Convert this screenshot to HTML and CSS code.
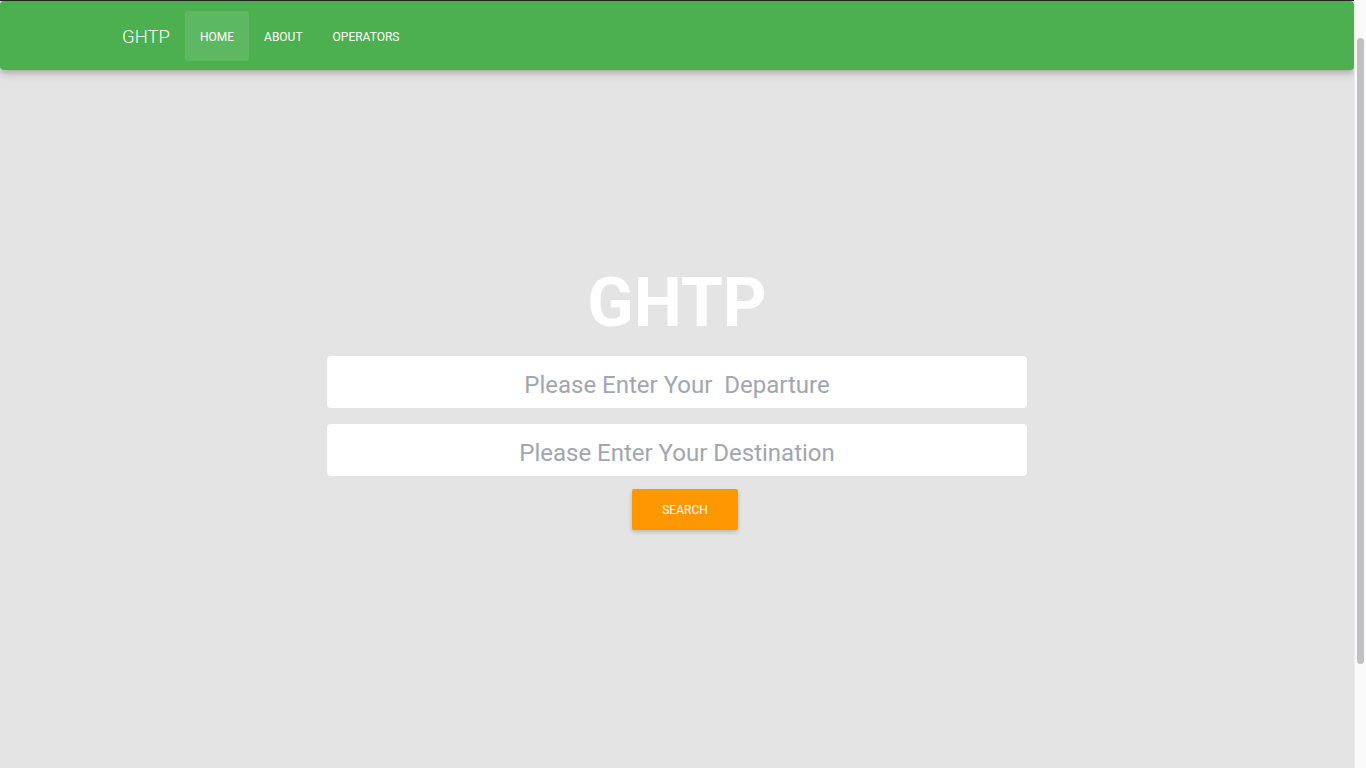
FILE: index.html
```html
<!DOCTYPE html>
<html lang="en">
<head>
<meta charset="utf-8">
<title>GHTP</title>
<link rel="stylesheet" href="styles.css">
</head>
<body>
<div class="page">
  <nav class="navbar">
    <a class="brand" href="#">GHTP</a>
    <ul class="nav">
      <li><a class="nav-link active" href="#">HOME</a></li>
      <li><a class="nav-link" href="#">ABOUT</a></li>
      <li><a class="nav-link" href="#">OPERATORS</a></li>
    </ul>
  </nav>
  <main class="hero">
    <h1 class="title">GHTP</h1>
    <form class="search">
      <input class="field" type="text" placeholder="Please Enter Your  Departure">
      <input class="field" type="text" placeholder="Please Enter Your Destination">
      <button class="btn" type="button">SEARCH</button>
    </form>
  </main>
</div>
<div class="scrollbar"><div class="thumb"></div></div>
</body>
</html>
```

FILE: styles.css
```css
html, body {
  margin: 0;
  padding: 0;
  height: 100%;
  overflow: hidden;
}
body {
  background: #e4e4e4;
  font-family: Roboto, "Liberation Sans", sans-serif;
  border-top: 1px solid #222;
  box-sizing: border-box;
}
.page {
  width: 1354px;
  height: 767px;
  display: flex;
  flex-direction: column;
}
.navbar {
  height: 69px;
  flex: none;
  box-sizing: border-box;
  background: #4caf50;
  border-radius: 4px;
  box-shadow: 0 4px 10px rgba(0,0,0,0.18), 0 2px 4px rgba(0,0,0,0.1);
  display: flex;
  align-items: center;
  padding-left: 122px;
}
.brand {
  color: #fff;
  text-decoration: none;
  font-size: 18.5px;
  font-weight: 300;
  margin-right: 15px;
  padding-top: 2px;
}
.nav {
  list-style: none;
  margin: 0;
  padding: 0;
  display: flex;
  align-items: center;
}
.nav-link {
  display: flex;
  align-items: center;
  height: 50px;
  box-sizing: border-box;
  padding: 3px 15px 0;
  color: #fff;
  text-decoration: none;
  font-size: 12px;
  border-radius: 3px;
}
.nav-link.active {
  background: rgba(255,255,255,0.1);
}
.hero {
  flex: 1;
  display: flex;
  flex-direction: column;
  align-items: center;
  padding-top: 191px;
}
.title {
  margin: 0;
  color: #fff;
  font-size: 68px;
  font-weight: 700;
  line-height: 84px;
}
.search {
  display: flex;
  flex-direction: column;
  align-items: center;
  margin-top: 11px;
}
.field {
  width: 700px;
  height: 52px;
  box-sizing: border-box;
  border: none;
  border-radius: 4px;
  background: #fff;
  margin: 0 0 16px;
  text-align: center;
  font-family: Roboto, "Liberation Sans", sans-serif;
  font-size: 24px;
  color: #333;
  outline: none;
  padding: 6px 0 0;
}
.field::placeholder {
  color: #a3a6ad;
}
.field:last-of-type {
  margin-bottom: 13px;
}
.btn {
  width: 106px;
  height: 41px;
  margin-left: 16px;
  border: none;
  border-radius: 2px;
  background: #ff9800;
  color: #fff;
  font-family: Roboto, "Liberation Sans", sans-serif;
  font-size: 12px;
  box-shadow: 0 2px 4px rgba(0,0,0,0.2);
}
.scrollbar {
  position: fixed;
  top: 0;
  right: 0;
  width: 12px;
  height: 100%;
  background: #fafafa;
  border-left: 1px solid #ececec;
  box-sizing: border-box;
}
.thumb {
  position: absolute;
  top: 38px;
  left: 2px;
  width: 7px;
  height: 626px;
  border-radius: 4px;
  background: #c1c1c5;
}
```
